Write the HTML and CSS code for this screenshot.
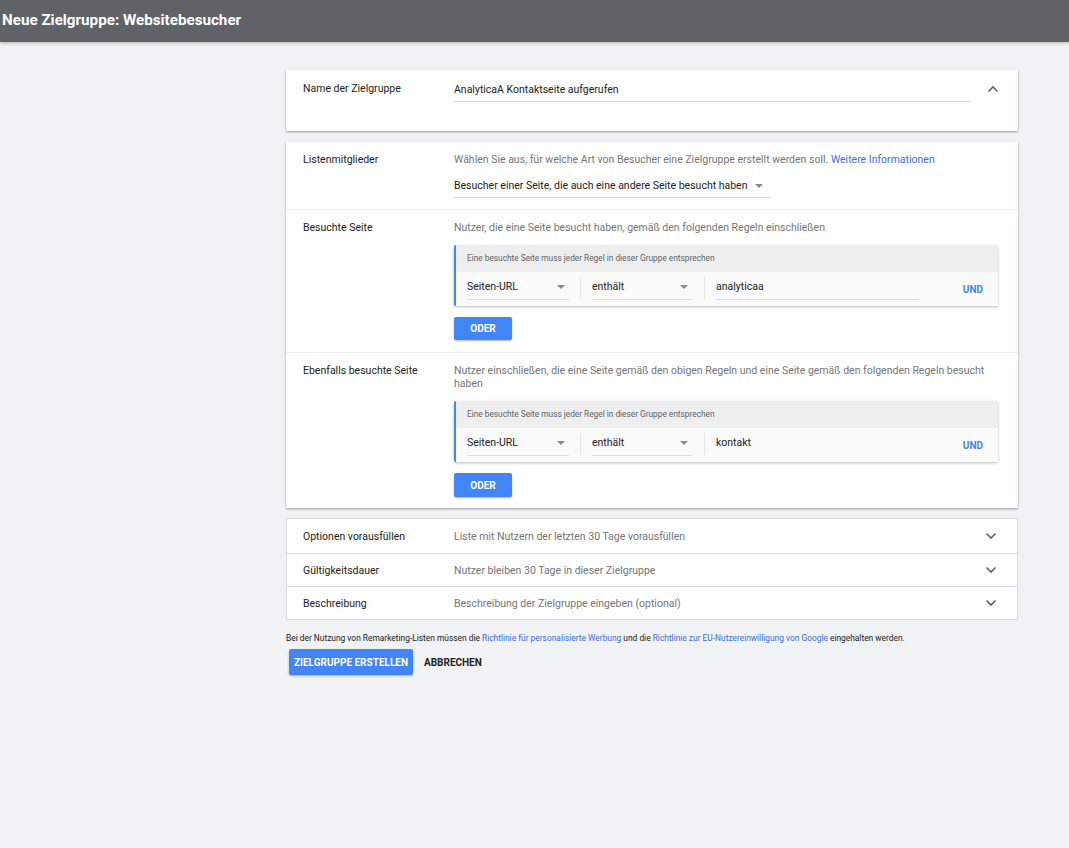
FILE: index.html
```html
<!DOCTYPE html>
<html lang="de">
<head>
<meta charset="utf-8">
<title>Neue Zielgruppe: Websitebesucher</title>
<link rel="stylesheet" href="styles.css">
</head>
<body>
<header class="topbar"><h1 class="title">Neue Zielgruppe: Websitebesucher</h1></header>
<main class="main">
  <section class="card card-name">
    <div class="row">
      <div class="label">Name der Zielgruppe</div>
      <div class="name-input">AnalyticaA Kontaktseite aufgerufen</div>
      <div class="chev-cell">
        <svg class="chev" width="12" height="8" viewBox="0 0 12 8"><path d="M1.5 6.5 L6 2 L10.5 6.5" fill="none" stroke="#5f6368" stroke-width="1.6"/></svg>
      </div>
    </div>
  </section>

  <section class="card card-main">
    <div class="section sec-members">
      <div class="label">Listenmitglieder</div>
      <div class="content">
        <div class="desc">Wählen Sie aus, für welche Art von Besucher eine Zielgruppe erstellt werden soll. <a class="link">Weitere Informationen</a></div>
        <div class="dropdown">Besucher einer Seite, die auch eine andere Seite besucht haben <span class="caret"></span></div>
      </div>
    </div>
    <div class="section sec-visited">
      <div class="label">Besuchte Seite</div>
      <div class="content">
        <div class="desc">Nutzer, die eine Seite besucht haben, gemäß den folgenden Regeln einschließen</div>
        <div class="rulebox">
          <div class="rule-head">Eine besuchte Seite muss jeder Regel in dieser Gruppe entsprechen</div>
          <div class="rule-row">
            <div class="field sel sel-1">Seiten-URL <span class="caret"></span></div>
            <div class="vsep"></div>
            <div class="field sel sel-2">enthält <span class="caret"></span></div>
            <div class="vsep"></div>
            <div class="field val">analyticaa</div>
            <div class="und">UND</div>
          </div>
        </div>
        <button class="btn btn-or">ODER</button>
      </div>
    </div>
    <div class="section sec-also">
      <div class="label">Ebenfalls besuchte Seite</div>
      <div class="content">
        <div class="desc">Nutzer einschließen, die eine Seite gemäß den obigen Regeln und eine Seite gemäß den folgenden Regeln besucht haben</div>
        <div class="rulebox">
          <div class="rule-head">Eine besuchte Seite muss jeder Regel in dieser Gruppe entsprechen</div>
          <div class="rule-row">
            <div class="field sel sel-1">Seiten-URL <span class="caret"></span></div>
            <div class="vsep"></div>
            <div class="field sel sel-2">enthält <span class="caret"></span></div>
            <div class="vsep"></div>
            <div class="field val noline">kontakt</div>
            <div class="und">UND</div>
          </div>
        </div>
        <button class="btn btn-or">ODER</button>
      </div>
    </div>
  </section>

  <section class="card card-options">
    <div class="opt-row">
      <div class="label">Optionen vorausfüllen</div>
      <div class="opt-desc">Liste mit Nutzern der letzten 30 Tage vorausfüllen</div>
      <svg class="chev" width="12" height="8" viewBox="0 0 12 8"><path d="M1.5 1.5 L6 6 L10.5 1.5" fill="none" stroke="#5f6368" stroke-width="1.6"/></svg>
    </div>
    <div class="opt-row">
      <div class="label">Gültigkeitsdauer</div>
      <div class="opt-desc">Nutzer bleiben 30 Tage in dieser Zielgruppe</div>
      <svg class="chev" width="12" height="8" viewBox="0 0 12 8"><path d="M1.5 1.5 L6 6 L10.5 1.5" fill="none" stroke="#5f6368" stroke-width="1.6"/></svg>
    </div>
    <div class="opt-row">
      <div class="label">Beschreibung</div>
      <div class="opt-desc">Beschreibung der Zielgruppe eingeben (optional)</div>
      <svg class="chev" width="12" height="8" viewBox="0 0 12 8"><path d="M1.5 1.5 L6 6 L10.5 1.5" fill="none" stroke="#5f6368" stroke-width="1.6"/></svg>
    </div>
  </section>

  <p class="policy">Bei der Nutzung von Remarketing-Listen müssen die <a class="link">Richtlinie für personalisierte Werbung</a> und die <a class="link">Richtlinie zur EU-Nutzereinwilligung von Google</a> eingehalten werden.</p>
  <div class="actions">
    <button class="btn btn-create">ZIELGRUPPE ERSTELLEN</button>
    <button class="btn-text">ABBRECHEN</button>
  </div>
</main>
</body>
</html>
```

FILE: styles.css
```css
* { box-sizing: border-box; }
html, body { margin: 0; padding: 0; }
body {
  background: #f1f2f4;
  font-family: Roboto, "Liberation Sans", Arial, sans-serif;
  color: #212121;
  font-size: 10.5px;
  line-height: 13px;
  min-height: 848px;
}
.topbar {
  height: 42px;
  background: #5f6267;
  box-shadow: 0 1px 3px rgba(0,0,0,0.25);
  display: flex;
  align-items: center;
  padding-left: 2px;
}
.title {
  margin: 0;
  color: #fff;
  font-size: 15.2px;
  font-weight: 700;
  line-height: 18px;
  margin-top: -2px;
}
.main {
  width: 732px;
  margin-left: 286px;
  padding-top: 28px;
}
.card {
  background: #fff;
  box-shadow: 0 1px 2px rgba(0,0,0,0.3), 0 1px 3px rgba(0,0,0,0.08);
}
.label { color: #212121; }
.link { color: #3b6fe0; text-decoration: none; cursor: pointer; }

/* name card */
.card-name { padding: 11px 0 29px 17px; }
.card-name .row {
  display: grid;
  grid-template-columns: 151px 517px 1fr;
  align-items: start;
}
.card-name .label { padding-top: 1px; }
.name-input {
  padding: 1px 0 4px;
  line-height: 15px;
  border-bottom: 1px solid #dcdcdc;
}
.chev-cell { display: flex; justify-content: center; padding-top: 4px; padding-right: 4px; }

/* main card */
.card-main { margin-top: 11px; }
.section {
  display: grid;
  grid-template-columns: 151px 544px;
  padding-left: 17px;
}
.section + .section { border-top: 1px solid #efefef; }
.sec-members { padding-top: 11px; padding-bottom: 11px; }
.sec-visited { padding-top: 11px; padding-bottom: 12px; }
.sec-also { padding-top: 11px; padding-bottom: 11px; }
.desc { color: #757575; }
.dropdown {
  margin-top: 13px;
  width: max-content;
  padding: 0 8px 5px 0;
  border-bottom: 1px solid #dcdcdc;
  display: flex;
  align-items: center;
  gap: 8px;
}
.caret {
  display: inline-block;
  width: 0; height: 0;
  border-left: 4px solid transparent;
  border-right: 4px solid transparent;
  border-top: 4px solid #8a8a8a;
}
.rulebox {
  margin-top: 11px;
  border-left: 2px solid #4285f4;
  box-shadow: 0 1px 3px rgba(0,0,0,0.28);
  border-radius: 2px;
}
.rule-head {
  background: #eeeeee;
  height: 27px;
  padding-left: 11px;
  display: flex;
  align-items: center;
  font-size: 8.3px;
  color: #5f6368;
}
.rule-row {
  background: #fafafa;
  height: 34px;
  display: flex;
  align-items: flex-start;
  padding-left: 11px;
}
.field {
  margin-top: 8px;
  padding-bottom: 6px;
  border-bottom: 1px solid #dcdcdc;
  line-height: 13px;
}
.sel { display: flex; justify-content: space-between; align-items: center; padding-right: 4px; }
.sel-1 { width: 102px; }
.sel-2 { width: 100px; }
.val { width: 203px; }
.val.noline { border-bottom-color: transparent; }
.vsep { width: 1px; height: 22px; background: #e4e4e4; margin: 5px 11px 0; }
.sel-2 + .vsep { margin-left: 12px; }
.und {
  margin-left: auto;
  margin-right: 15px;
  margin-top: 11px;
  color: #4285f4;
  font-weight: 700;
  font-size: 10px;
}
.btn {
  border: none;
  background: #4285f4;
  color: #fff;
  font-family: inherit;
  font-weight: 700;
  font-size: 10px;
  border-radius: 2px;
  box-shadow: 0 1px 2px rgba(0,0,0,0.3);
  padding: 0;
  cursor: pointer;
}
.btn-or { margin-top: 11px; width: 58px; height: 23px; }
.sec-also .btn-or { height: 24px; }

/* options card */
.card-options {
  margin-top: 10px;
  border: 1px solid #d9d9d9;
  box-shadow: none;
}
.opt-row {
  display: grid;
  grid-template-columns: 151px 1fr 12px;
  align-items: center;
  height: 34px;
  padding: 0 20px 0 16px;
}
.opt-row + .opt-row { border-top: 1px solid #dcdcdc; height: 33px; }
.opt-desc { color: #757575; }

/* footer */
.policy {
  margin: 11px 0 0;
  font-size: 8.4px;
  line-height: 14px;
  color: #212121;
}
.actions {
  display: flex;
  align-items: center;
  margin-top: 4px;
  padding-left: 3px;
  gap: 11px;
}
.btn-create { width: 124px; height: 26px; }
.btn-text {
  border: none;
  background: none;
  font-family: inherit;
  font-weight: 700;
  font-size: 10px;
  color: #212121;
  padding: 0;
}
```
